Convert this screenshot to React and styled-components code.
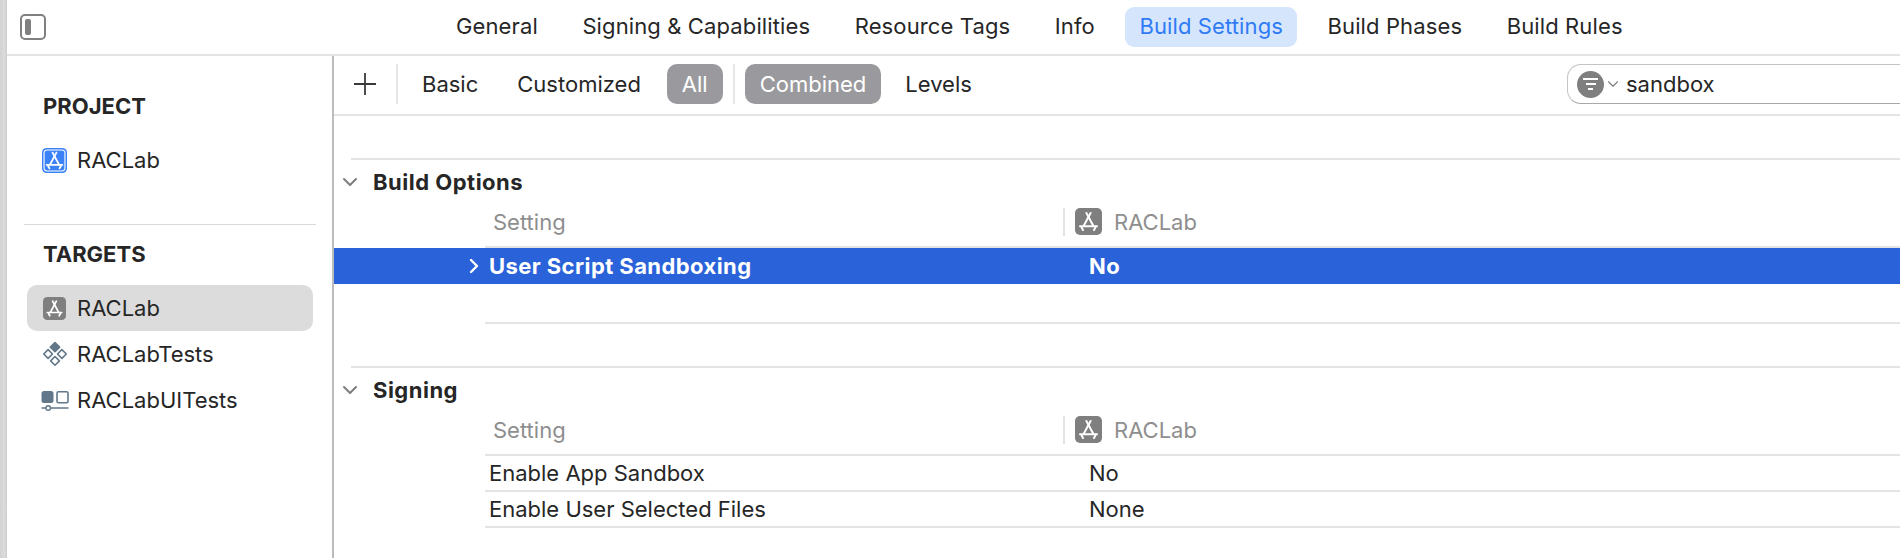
import styled, { createGlobalStyle } from 'styled-components';

const GlobalStyle = createGlobalStyle`
  html, body {
    margin: 0;
    height: 100%;
    overflow: hidden;
    background: #ffffff;
  }
  body {
    font-family: Inter, "Liberation Sans", sans-serif;
    color: #262626;
  }
  * {
    box-sizing: border-box;
  }
`;

const AppIcon = ({ size = 27, bg = '#7f7f7f', outlined }) => (
  <svg width={size} height={size} viewBox="0 0 27 27">
    <rect width="27" height="27" rx="5" fill={bg} />
    {outlined && (
      <rect x="2.2" y="2.2" width="22.6" height="22.6" rx="3.4" fill="none" stroke="#fff" strokeWidth="1.2" />
    )}
    <g stroke="#fff" strokeWidth="2" strokeLinecap="round" fill="none">
      <path d="M15.6 5 8.6 18" />
      <path d="M11.4 5 18.4 18" />
      <path d="M5 18.2h17" />
      <path d="M8 22 6.6 19.4" />
      <path d="M19 22 20.4 19.4" />
    </g>
  </svg>
);

const TestsIcon = () => (
  <svg width="26" height="26" viewBox="0 0 26 26" fill="none" stroke="#627789" strokeWidth="1.6" strokeLinejoin="round">
    <path d="M13 1.5 17.6 6.1 13 10.7 8.4 6.1Z" fill="#627789" />
    <path d="M6.1 8.6 10.5 13 6.1 17.4 1.7 13Z" />
    <path d="M19.9 8.6 24.3 13 19.9 17.4 15.5 13Z" />
    <path d="M13 15.5 17.4 19.9 13 24.3 8.6 19.9Z" />
  </svg>
);

const UITestsIcon = () => (
  <svg width="28" height="21" viewBox="0 0 28 21" fill="none">
    <rect x="0.5" y="1" width="12" height="12" rx="2.5" fill="#627789" />
    <rect x="16" y="1.8" width="11" height="11" rx="1.5" stroke="#627789" strokeWidth="1.6" />
    <path d="M0.5 18h4.5M9.5 18h18" stroke="#627789" strokeWidth="1.5" />
    <circle cx="7.2" cy="18" r="2.3" stroke="#627789" strokeWidth="1.4" />
  </svg>
);

const Chevron = ({ dir = 'down', color = '#7d7d7d', size = 16, width = 2 }) => (
  <svg width={size} height={size} viewBox="0 0 16 16" fill="none" stroke={color} strokeWidth={width} strokeLinecap="round" strokeLinejoin="round">
    {dir === 'down' ? <path d="M2 5 8 11 14 5" /> : <path d="M5 2 11 8 5 14" />}
  </svg>
);

const Window = styled.div`
  display: grid;
  grid-template-columns: 7px 1fr;
  width: 1900px;
  height: 558px;
  overflow: hidden;
`;

const EdgeStrip = styled.div`
  background: linear-gradient(90deg, #d2d2d2, #dcdcdc 70%, #c9c9c9);
`;

const Content = styled.div`
  display: flex;
  flex-direction: column;
  min-width: 0;
`;

const TabBar = styled.header`
  display: flex;
  align-items: center;
  height: 56px;
  padding-left: 13px;
  border-bottom: 2px solid #e4e4e4;
`;

const ToggleButton = styled.div`
  width: 26px;
  height: 26px;
  padding: 3px;
  border: 2px solid #808080;
  border-radius: 5px;
  margin-right: 396px;

  &::before {
    content: '';
    display: block;
    width: 6px;
    height: 100%;
    border-radius: 2px;
    background: #808080;
  }
`;

const Tabs = styled.nav`
  display: flex;
  gap: 16.5px;
`;

const Tab = styled.div`
  height: 40px;
  padding: 0 14px;
  border-radius: 9px;
  font-size: 22px;
  letter-spacing: 0.12px;
  line-height: 38px;
  white-space: nowrap;
  color: ${({ $active }) => ($active ? '#2f7bf6' : '#262626')};
  background: ${({ $active }) => ($active ? '#d5e5fc' : 'transparent')};
`;

const Panels = styled.div`
  flex: 1;
  display: grid;
  grid-template-columns: 325px 2px 1fr;
  min-height: 0;
`;

const Sidebar = styled.aside`
  display: flex;
  flex-direction: column;
  padding: 36px 19px 0 20px;
`;

const SidebarDivider = styled.div`
  height: 1px;
  margin: ${({ $top }) => $top}px -3px 0;
  background: #d9d9d9;
`;

const SidebarTitle = styled.h2`
  margin: ${({ $top = 0 }) => $top}px 0 ${({ $gap }) => $gap}px 16px;
  font-size: 22px;
  line-height: 28px;
  font-weight: 700;
`;

const SidebarItem = styled.div`
  display: flex;
  align-items: center;
  height: 46px;
  border-radius: 10px;
  background: ${({ $selected }) => ($selected ? '#dcdcdc' : 'transparent')};
  font-size: 22px;
  white-space: nowrap;
`;

const ItemIcon = styled.span`
  display: flex;
  justify-content: center;
  flex: 0 0 50px;
  padding-left: 5px;
`;

const PaneRule = styled.div`
  background: #bcbcbc;
`;

const Main = styled.main`
  display: flex;
  flex-direction: column;
  min-width: 0;
`;

const Toolbar = styled.div`
  display: flex;
  align-items: center;
  height: 60px;
  flex: none;
  padding: 0 0 2px 20px;
  border-bottom: 2px solid #e4e4e4;
  font-size: 22px;
`;

const ToolbarSeparator = styled.div`
  width: 2px;
  height: 40px;
  margin: ${({ $margin }) => $margin};
  background: #e6e6e6;
`;

const FilterPill = styled.div`
  height: 40px;
  padding: 0 ${({ $pad }) => $pad}px;
  margin-right: ${({ $after }) => $after}px;
  border-radius: 10px;
  line-height: 41px;
  white-space: nowrap;
  color: ${({ $active }) => ($active ? '#ffffff' : '#262626')};
  background: ${({ $active }) => ($active ? '#9a9a9e' : 'transparent')};
`;

const SearchField = styled.div`
  display: flex;
  align-items: center;
  width: 360px;
  height: 40px;
  margin-left: auto;
  margin-right: -27px;
  padding-left: 9px;
  border: 1px solid #c4c4c4;
  border-bottom-color: #a8a8a8;
  border-radius: 14px;
  white-space: nowrap;
`;

const SearchText = styled.span`
  margin-left: 7px;
  line-height: 40px;
`;

const FilterBadge = styled.span`
  display: flex;
  flex-direction: column;
  align-items: center;
  justify-content: center;
  gap: 3px;
  width: 27px;
  height: 27px;
  margin-right: 3px;
  border-radius: 50%;
  background: #7f7f7f;
`;

const FilterLine = styled.i`
  display: block;
  width: ${({ $width }) => $width}px;
  height: 2px;
  background: #fff;
`;

const Settings = styled.div`
  flex: 1;
  padding-top: 42px;
`;

const Section = styled.section`
  margin-bottom: 42px;
`;

const SectionHeader = styled.div`
  display: flex;
  align-items: center;
  gap: 15px;
  height: 46px;
  margin-left: 17px;
  border-top: 2px solid #e4e4e4;
  font-size: 22px;
  font-weight: 700;
  letter-spacing: 0.5px;

  svg {
    margin-left: -9px;
  }
`;

const SettingsGrid = styled.div`
  display: grid;
  grid-template-columns: 600px 1fr;
  height: ${({ $height }) => $height}px;
  align-items: center;
  margin-left: 151px;
  padding-left: 4px;
  border-bottom: 2px solid #e4e4e4;
  font-size: 22px;
`;

const HeadRow = styled(SettingsGrid)`
  height: 44px;
  padding-left: 8px;
  padding-bottom: 7px;
  color: #8e8e8e;
  grid-template-columns: 570px 1fr;
`;

const TargetHead = styled.div`
  display: flex;
  align-items: center;
  height: 28px;
  padding-left: 10px;
  gap: 12px;
  border-left: 2px solid #e4e4e4;
`;

const SelectedRow = styled.div`
  display: grid;
  grid-template-columns: 155px 600px 1fr;
  align-items: center;
  height: 36px;
  background: #2a62d9;
  color: #ffffff;
  font-size: 22px;
  font-weight: 700;
  letter-spacing: 0.42px;
`;

const Disclosure = styled.span`
  display: flex;
  justify-content: flex-end;
  padding-right: 7px;
`;

const App = () => (
  <Window>
    <GlobalStyle />
    <EdgeStrip />
    <Content>
      <TabBar>
        <ToggleButton />
        <Tabs>
          <Tab>General</Tab>
          <Tab>Signing &amp; Capabilities</Tab>
          <Tab>Resource Tags</Tab>
          <Tab>Info</Tab>
          <Tab $active>Build Settings</Tab>
          <Tab>Build Phases</Tab>
          <Tab>Build Rules</Tab>
        </Tabs>
      </TabBar>
      <Panels>
        <Sidebar>
          <SidebarTitle $gap={17}>PROJECT</SidebarTitle>
          <SidebarItem>
            <ItemIcon>
              <AppIcon size={25} bg="#3b82f6" outlined />
            </ItemIcon>
            RACLab
          </SidebarItem>
          <SidebarDivider $top={41} />
          <SidebarTitle $top={15} $gap={17}>TARGETS</SidebarTitle>
          <SidebarItem $selected>
            <ItemIcon>
              <AppIcon size={23} />
            </ItemIcon>
            RACLab
          </SidebarItem>
          <SidebarItem>
            <ItemIcon>
              <TestsIcon />
            </ItemIcon>
            RACLabTests
          </SidebarItem>
          <SidebarItem>
            <ItemIcon>
              <UITestsIcon />
            </ItemIcon>
            RACLabUITests
          </SidebarItem>
        </Sidebar>
        <PaneRule />
        <Main>
          <Toolbar>
            <svg width="22" height="22" viewBox="0 0 22 22" stroke="#3a3a3a" strokeWidth="1.8">
              <path d="M11 0v22M0 11h22" />
            </svg>
            <ToolbarSeparator $margin="0 10px 0 20px" />
            <FilterPill $pad={14} $after={11}>Basic</FilterPill>
            <FilterPill $pad={14} $after={12}>Customized</FilterPill>
            <FilterPill $pad={15} $active>All</FilterPill>
            <ToolbarSeparator $margin="0 10px" />
            <FilterPill $pad={15} $active $after={10}>Combined</FilterPill>
            <FilterPill $pad={14}>Levels</FilterPill>
            <SearchField>
              <FilterBadge>
                <FilterLine $width={15} />
                <FilterLine $width={10} />
                <FilterLine $width={5} />
              </FilterBadge>
              <Chevron size={12} width={1.5} />
              <SearchText>sandbox</SearchText>
            </SearchField>
          </Toolbar>
          <Settings>
            <Section>
              <SectionHeader>
                <Chevron />
                Build Options
              </SectionHeader>
              <HeadRow>
                <span>Setting</span>
                <TargetHead>
                  <AppIcon />
                  RACLab
                </TargetHead>
              </HeadRow>
              <SelectedRow>
                <Disclosure>
                  <Chevron dir="right" color="#ffffff" width={2.4} />
                </Disclosure>
                <span>User Script Sandboxing</span>
                <span>No</span>
              </SelectedRow>
              <SettingsGrid $height={40} />
            </Section>
            <Section>
              <SectionHeader>
                <Chevron />
                Signing
              </SectionHeader>
              <HeadRow>
                <span>Setting</span>
                <TargetHead>
                  <AppIcon />
                  RACLab
                </TargetHead>
              </HeadRow>
              <SettingsGrid $height={36}>
                <span>Enable App Sandbox</span>
                <span>No</span>
              </SettingsGrid>
              <SettingsGrid $height={36}>
                <span>Enable User Selected Files</span>
                <span>None</span>
              </SettingsGrid>
            </Section>
          </Settings>
        </Main>
      </Panels>
    </Content>
  </Window>
);

export default App;
